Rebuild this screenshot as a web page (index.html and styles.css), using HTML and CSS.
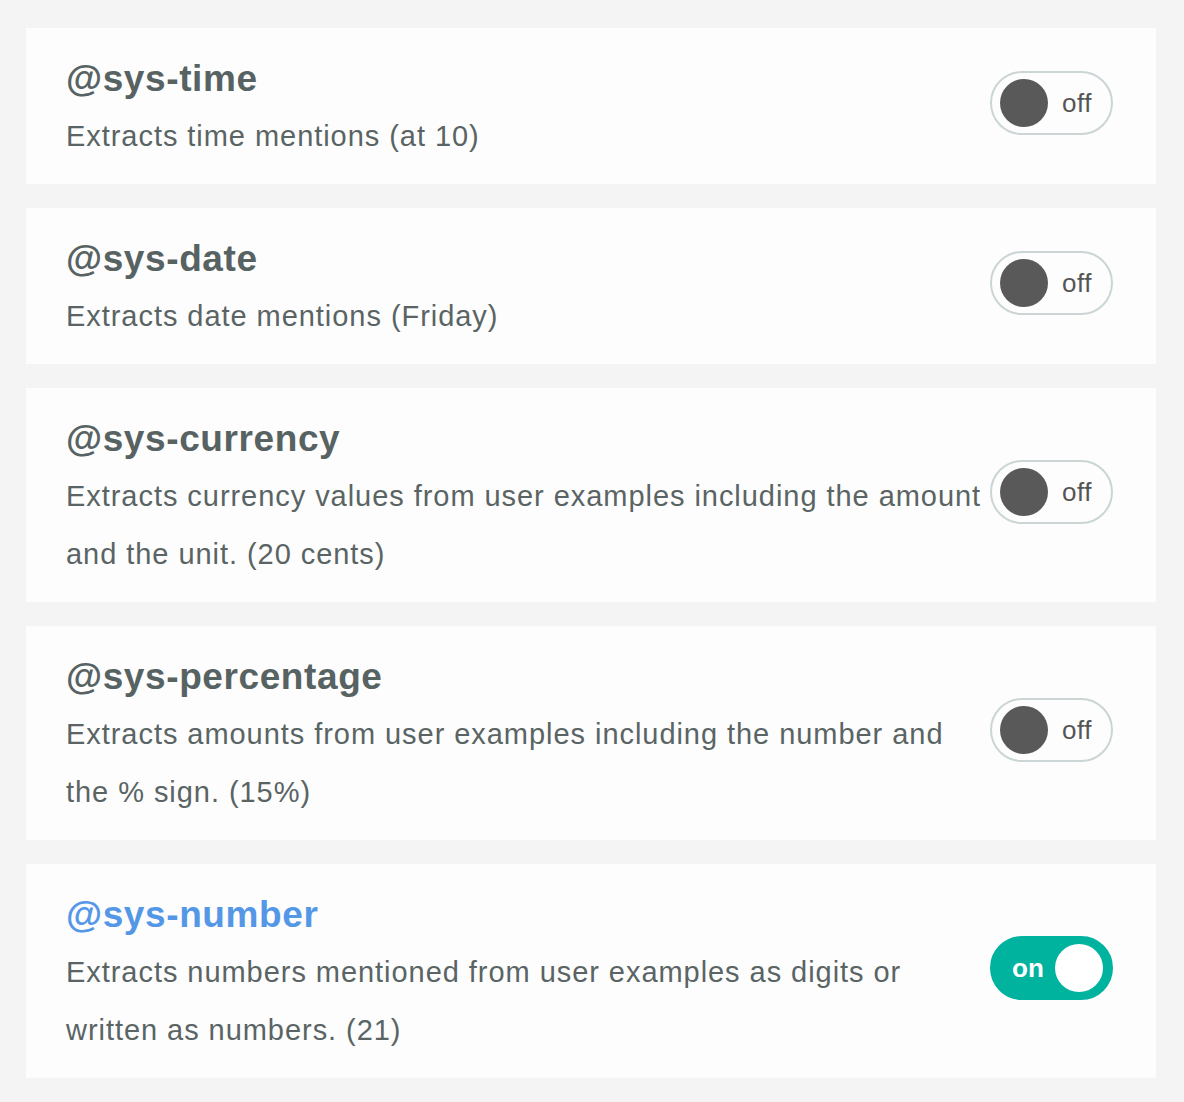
FILE: index.html
```html
<!DOCTYPE html>
<html lang="en">
<head>
<meta charset="utf-8">
<title>System entities</title>
<link rel="stylesheet" href="styles.css">
</head>
<body>
<main class="list">
  <section class="card">
    <div class="info">
      <h2 class="name">@sys-time</h2>
      <p class="desc">Extracts time mentions (at 10)</p>
    </div>
    <div class="toggle toggle-off"><span class="knob"></span><span class="label">off</span></div>
  </section>
  <section class="card">
    <div class="info">
      <h2 class="name">@sys-date</h2>
      <p class="desc">Extracts date mentions (Friday)</p>
    </div>
    <div class="toggle toggle-off"><span class="knob"></span><span class="label">off</span></div>
  </section>
  <section class="card">
    <div class="info">
      <h2 class="name">@sys-currency</h2>
      <p class="desc">Extracts currency values from user examples including the amount and the unit. (20 cents)</p>
    </div>
    <div class="toggle toggle-off"><span class="knob"></span><span class="label">off</span></div>
  </section>
  <section class="card">
    <div class="info">
      <h2 class="name">@sys-percentage</h2>
      <p class="desc">Extracts amounts from user examples including the number and the % sign. (15%)</p>
    </div>
    <div class="toggle toggle-off"><span class="knob"></span><span class="label">off</span></div>
  </section>
  <section class="card">
    <div class="info">
      <h2 class="name name-active">@sys-number</h2>
      <p class="desc">Extracts numbers mentioned from user examples as digits or written as numbers. (21)</p>
    </div>
    <div class="toggle toggle-on"><span class="label">on</span><span class="knob"></span></div>
  </section>
</main>
</body>
</html>
```

FILE: styles.css
```css
html, body {
  margin: 0;
  padding: 0;
  background: #f4f4f4;
}

body {
  font-family: "Liberation Sans", Arial, Helvetica, sans-serif;
  color: #5a6464;
}

.list {
  display: flex;
  flex-direction: column;
  gap: 24px;
  padding: 28px 28px 24px 26px;
}

.card {
  display: flex;
  align-items: center;
  background: #fdfdfd;
  padding: 0 43px 0 40px;
}

.info {
  flex: 1;
  min-width: 0;
  padding: 29px 0 19px;
  margin-right: 4px;
}

.name {
  margin: 0 0 6px;
  font-size: 37px;
  line-height: 44px;
  font-weight: 700;
  letter-spacing: 0.6px;
  color: #576262;
}

.name-active {
  color: #5597e7;
}

.desc {
  margin: 0;
  font-size: 29px;
  line-height: 58px;
  letter-spacing: 0.95px;
  color: #5a6464;
}

.toggle {
  flex: 0 0 auto;
  box-sizing: border-box;
  width: 123px;
  height: 64px;
  border-radius: 32px;
  display: flex;
  align-items: center;
  padding: 0 8px;
  margin-bottom: 7px;
}

.toggle-off {
  border: 2px solid #cbd5d5;
  background: #fdfdfd;
}

.toggle-on {
  border: 2px solid #00b39e;
  background: #00b39e;
}

.knob {
  width: 48px;
  height: 48px;
  border-radius: 50%;
  flex: 0 0 auto;
}

.toggle-off .knob {
  background: #595959;
}

.toggle-on .knob {
  background: #ffffff;
  margin-left: auto;
}

.label {
  font-size: 26px;
  line-height: 1;
}

.toggle-off .label {
  color: #555555;
  margin-left: 14px;
  letter-spacing: 0.5px;
}

.toggle-on .label {
  color: #ffffff;
  font-weight: 700;
  margin-left: 12px;
}
```
